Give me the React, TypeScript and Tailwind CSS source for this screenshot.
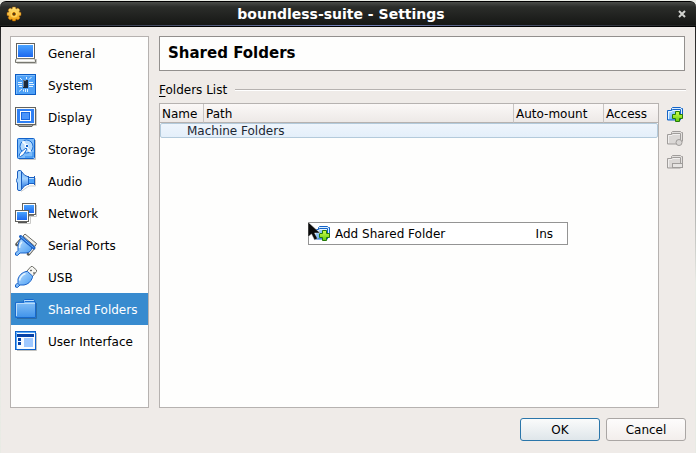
import type { ReactNode } from "react";

type IconProps = { children: ReactNode };

function PageIcon({ children }: IconProps) {
  return (
    <svg width="24" height="24" viewBox="0 0 24 24" fill="none" aria-hidden="true" className="shrink-0">
      {children}
    </svg>
  );
}

function Gradients() {
  return (
    <svg width="0" height="0" className="absolute" aria-hidden="true">
      <defs>
        <linearGradient id="screen" x1="0" y1="0" x2="0" y2="1">
          <stop offset="0" stopColor="#4aa3ff" />
          <stop offset="1" stopColor="#1c68ee" />
        </linearGradient>
        <linearGradient id="sky" x1="0" y1="0" x2="1" y2="1">
          <stop offset="0" stopColor="#c4e4ff" />
          <stop offset="1" stopColor="#3f97f2" />
        </linearGradient>
        <linearGradient id="cone" x1="0" y1="0" x2="0" y2="1">
          <stop offset="0" stopColor="#6db5fa" />
          <stop offset="0.4" stopColor="#a5d3ff" />
          <stop offset="1" stopColor="#1b6fe0" />
        </linearGradient>
        <linearGradient id="folder" x1="0" y1="0" x2="0" y2="1">
          <stop offset="0" stopColor="#8ec6f8" />
          <stop offset="1" stopColor="#3f93ea" />
        </linearGradient>
        <linearGradient id="plus" x1="0" y1="0" x2="0" y2="1">
          <stop offset="0" stopColor="#d4ff4a" />
          <stop offset="1" stopColor="#62cc12" />
        </linearGradient>
        <linearGradient id="gear" x1="0" y1="0" x2="0" y2="1">
          <stop offset="0" stopColor="#ffe680" />
          <stop offset="1" stopColor="#f09a08" />
        </linearGradient>
      </defs>
    </svg>
  );
}

const pages: { name: string; icon: ReactNode }[] = [
  {
    name: "General",
    icon: (
      <>
        <path d="M3 22.5h19.5V18" stroke="#c9c9c5" />
        <rect x="2.5" y="2.5" width="18" height="15" fill="#fff" stroke="#62625e" />
        <rect x="4" y="4" width="15" height="12" fill="url(#screen)" />
        <path d="M2.5 17.5h18l1 1.5v2.5h-20V19z" fill="#e4e4de" stroke="#777770" />
        <path d="M3 19.5h17" stroke="#fff" />
      </>
    ),
  },
  {
    name: "System",
    icon: (
      <>
        <rect x="1.5" y="1.5" width="20" height="20" fill="#4da0f6" stroke="#0b5cc4" />
        <path d="M2.5 21V2.5H21" stroke="#7dbcfc" />
        <rect x="9" y="7" width="5" height="8" fill="#1c2a3a" />
        <path d="M9.500 14V7.500H12" stroke="#6f8296" />
        <path
          d="M4 9.500h4M4 11.500h4M5 13.500h3M15 9.500h4M15 11.500h5M15 13.500h4M12.500 4v2M15 6.500l2.500-2.500M5 18.500l3-2.500M11.500 16v3M13.500 16v3M9.500 16.500v2M6 5l2 2"
          stroke="#e5f4ff"
        />
      </>
    ),
  },
  {
    name: "Display",
    icon: (
      <>
        <path d="M3 20.500h19.500V4" stroke="#cdcdc9" />
        <rect x="1.500" y="2.500" width="20" height="17" fill="#f8f8f4" stroke="#62625e" />
        <rect x="3" y="4" width="17" height="14" fill="#2f80f4" />
        <rect x="6.500" y="6.500" width="10" height="9" fill="#1768df" stroke="#fff" />
        <rect x="8" y="8" width="7" height="6" fill="#4a95fb" />
        <path d="M4 20h15l-1 1.500H5z" fill="#eee" stroke="#62625e" />
      </>
    ),
  },
  {
    name: "Storage",
    icon: (
      <>
        <path d="M21.500 3v19.500H5" stroke="#c6c6c4" />
        <rect x="3.500" y="1.500" width="17" height="20" rx="1" fill="#7dbcfa" stroke="#1262c9" />
        <circle cx="12.500" cy="9.500" r="6.500" fill="#b5dafd" stroke="#1c6fd4" />
        <path d="M8 5l4.500 4L10 4zM17 14l-4.500-4 3 5z" fill="#fff" stroke="#e8f5ff" />
        <circle cx="12.500" cy="9" r="2" fill="#fff" />
        <rect x="12" y="8" width="2" height="2" fill="#1262c9" />
        <path d="M5 18.500l1.500-3 5.500-4.500 1 1-3.500 5.500-3 2z" fill="#fff" stroke="#1c6fd4" />
        <path d="M19 15v5h-8" stroke="#2b86ea" />
      </>
    ),
  },
  {
    name: "Audio",
    icon: (
      <>
        <path d="M7 22.500l8-5.500h6.500V9" stroke="#cfcfcd" />
        <path d="M7.500 2.500Q10 7 14.500 8v7Q10 16 7.500 20.500z" fill="url(#cone)" stroke="#1c5fc0" />
        <path d="M3.500 9V3Q3.500 1.500 5 1.500h1.500q1 0 1 1.500v17q0 1.500-1 1.500H5q-1.500 0-1.500-1.500v-6q-1-1-1-2.500t1-2.500z" fill="#a9d6ff" stroke="#1c5fc0" />
        <rect x="14.500" y="8.500" width="6" height="6" fill="#4ba2fa" stroke="#1c5fc0" />
        <path d="M15 9.500h5" stroke="#b5dcff" />
        <path d="M14.500 7v9M20.500 7v9" stroke="#1c5fc0" />
      </>
    ),
  },
  {
    name: "Network",
    icon: (
      <>
        <path d="M11 15.500h11.500V4M4 22.500h12.500V12" stroke="#c9c9c7" />
        <rect x="8.500" y="2.500" width="13" height="11" fill="#fff" stroke="#62625e" />
        <rect x="10" y="4" width="10" height="8" fill="url(#screen)" />
        <path d="M12 14.500h8" stroke="#777" />
        <rect x="1.500" y="9.500" width="13" height="11" fill="#fff" stroke="#62625e" />
        <rect x="3" y="11" width="10" height="8" fill="url(#screen)" />
        <path d="M4 21.500h9" stroke="#555" />
      </>
    ),
  },
  {
    name: "Serial Ports",
    icon: (
      <>
        <path d="M9 3l2-2 11.500 9.500-1.500 3z" fill="#f1f1ec" stroke="#6c6c66" />
        <path d="M3 11.500L7.500 6.500M14.500 21L19 15.500" stroke="#5d5d58" strokeWidth="3.500" strokeLinecap="round" />
        <path d="M3.500 11L8 6M15 20.500l4.500-5.500" stroke="#eeeeea" strokeWidth="1.500" />
        <path d="M7.500 5.500L18 14.500q-1 5-6 5.500H6l-2.500 2.500-2-.5v-2l2.500-2.500V12q1-5 3.500-6.500z" fill="url(#sky)" stroke="#1b62c8" />
        <path d="M6.500 3.500L20 15" stroke="#1b62c8" strokeWidth="3" strokeLinecap="round" />
        <path d="M7 3.800L19.500 14.500" stroke="#6db4fb" />
        <path d="M5.500 15q0-4 2.500-6" stroke="#e3f3ff" strokeWidth="1.500" />
      </>
    ),
  },
  {
    name: "USB",
    icon: (
      <>
        <path d="M12.500 6.500L17 1.500h1.500l4 3.500v1.500L18 12z" fill="#f6f6f2" stroke="#6c6c66" />
        <path d="M16.500 5l1 1M19.500 7.500l1 1" stroke="#444" strokeWidth="1.500" />
        <path d="M12 6.500h1.500l5 4.500v1.500Q16 19 10 20H6l-2.500 2.500-2-.5v-2L4 17.500V14Q6 8 12 6.500z" fill="url(#sky)" stroke="#1b62c8" />
        <path d="M5.500 15.500q1-5 6-7" stroke="#e6f5ff" strokeWidth="1.500" />
        <path d="M3.500 18l2 2" stroke="#1b62c8" />
      </>
    ),
  },
  {
    name: "Shared Folders",
    icon: (
      <>
        <path d="M3 21.500h19.500V6" stroke="#2c6da8" />
        <path d="M9.500 5V3.500l1-1h9l1 1V5h1v15.500h-20v-15z" fill="url(#folder)" stroke="#1769cc" />
        <path d="M10.500 3.500h9M2.500 19V6.500H21" stroke="#b9dcfb" />
        <path d="M2 5.500h8l1-1h9" stroke="#1d71d4" />
      </>
    ),
  },
  {
    name: "User Interface",
    icon: (
      <>
        <path d="M3 21.500h19.500V4" stroke="#c2c2bf" />
        <rect x="1.500" y="2.500" width="20" height="18" fill="#f7fbff" stroke="#0d62cc" />
        <path d="M2.500 20V3.500H21" stroke="#58aafa" />
        <rect x="3" y="5" width="17" height="3" fill="#0542a8" />
        <rect x="4" y="9" width="3" height="3" fill="#0542a8" />
        <rect x="4" y="13" width="3" height="3" fill="#0542a8" />
        <rect x="10" y="9" width="9" height="9" fill="#9ec8ff" />
      </>
    ),
  },
];

function FolderIcon({ badge }: { badge: "add" | "edit" | "remove" }) {
  const active = badge === "add";
  const line = active ? "#1564c8" : "#a09d9b";
  return (
    <svg width="16" height="16" viewBox="0 0 16 16" fill="none" aria-hidden="true" className="shrink-0">
      <path d="M4.500 3V1.500l1-1h8l1 1h1v9" fill={active ? "#d9eeff" : "#e3e0de"} stroke={line} />
      <path d="M.5 3.500h4l1-1h8v10.500H.5z" fill={active ? "url(#sky)" : "#dbd8d6"} stroke={line} />
      <path d="M1.500 12V4.500H5l1-1h7" stroke={active ? "#e5f5ff" : "#f1efee"} />
      {badge === "add" && (
        <path d="M8.500 4.500h4v3h3v4h-3v3h-4v-3h-3v-4h3z" fill="url(#plus)" stroke="#257a08" />
      )}
      {badge === "edit" && <circle cx="12" cy="11.500" r="3" fill="#d9d6d4" stroke="#a09d9b" />}
      {badge === "remove" && <rect x="5.500" y="8.500" width="10" height="4" fill="#e6e4e2" stroke="#a09d9b" />}
    </svg>
  );
}

function TitleBar() {
  return (
    <header className="rounded-t-md border-t border-black bg-linear-to-b from-[#4b4d4a] via-[#2b2d2a] via-20% to-[#141513]">
      <div className="flex h-[23px] items-center px-1.5">
        <svg width="16" height="16" viewBox="0 0 16 16" aria-hidden="true">
          <path
            d="M6.500 1h3l.5 2 2-1 2 2-1 2 2 .5v3l-2 .5 1 2-2 2-2-1-.5 2h-3L6 13l-2 1-2-2 1-2-2-.5v-3L3 6 2 4l2-2 2 1z"
            fill="url(#gear)"
            stroke="#a85c00"
            strokeWidth="0.500"
          />
          <circle cx="8" cy="8" r="3.500" fill="#ffd45a" />
          <circle cx="8" cy="8" r="1.500" fill="#2b2d2a" stroke="#b86a00" />
        </svg>
        <h1 className="flex-1 pr-3.5 text-center text-sm leading-4 font-bold text-white">boundless-suite - Settings</h1>
        <button type="button" aria-label="Close" className="flex h-4 w-4 items-center justify-center">
          <svg width="8" height="8" viewBox="0 0 8 8" aria-hidden="true">
            <path d="M1 1l6 6M7 1L1 7" stroke="#d2d3d0" strokeWidth="2" />
          </svg>
        </button>
      </div>
      <div className="h-px bg-linear-to-r from-[#20211f] via-[#7583bd] to-[#20211f]" />
      <div className="h-px bg-black" />
    </header>
  );
}

function Sidebar() {
  return (
    <nav className="flex w-[139px] shrink-0 flex-col border border-[#b6b2b0] bg-[#fefefd]">
      {pages.map((page) => (
        <button
          key={page.name}
          type="button"
          aria-current={page.name === "Shared Folders" ? "page" : undefined}
          className="flex h-8 items-center gap-2.5 pl-[3px] text-left whitespace-nowrap aria-[current=page]:bg-[#388bcf] aria-[current=page]:text-white"
        >
          <PageIcon>{page.icon}</PageIcon>
          <span className="pt-0.5">{page.name}</span>
        </button>
      ))}
    </nav>
  );
}

function ContextMenu() {
  return (
    <div className="absolute top-[118px] left-[148px] w-[260px] border border-[#949494] bg-white">
      <button type="button" role="menuitem" className="flex h-[21px] w-full items-center pr-3.5 pl-[5px] text-left">
        <FolderIcon badge="add" />
        <span className="flex-1 pl-[5px]">Add Shared Folder</span>
        <span>Ins</span>
      </button>
      <svg width="13" height="19" viewBox="0 0 13 19" aria-hidden="true" className="absolute -top-px -left-px">
        <path d="M0 0v15l3.500-3 3 6 3-1.500-3-5.500H12z" fill="#0a0a0a" stroke="#d8d8d8" strokeWidth="0.500" />
      </svg>
    </div>
  );
}

function FolderTable() {
  return (
    <div className="relative min-w-0 flex-1 border border-[#b6b2b0] bg-[#fefefd]">
      <table className="w-full table-fixed border-separate border-spacing-0 text-left leading-[14px]">
        <colgroup>
          <col className="w-11" />
          <col />
          <col className="w-[90px]" />
          <col className="w-[54px]" />
        </colgroup>
        <thead>
          <tr className="h-[19px] bg-linear-to-b from-[#fbf8f7] to-[#ece8e6]">
            <th className="border-r border-b border-[#b6b2b0] border-r-[#c9c5c3] p-0 pt-0.5 pl-0.5 font-normal">Name</th>
            <th className="border-r border-b border-[#b6b2b0] border-r-[#c9c5c3] p-0 pt-0.5 pl-0.5 font-normal">Path</th>
            <th className="border-r border-b border-[#b6b2b0] border-r-[#c9c5c3] p-0 pt-0.5 pl-0.5 font-normal">
              Auto-mount
            </th>
            <th className="border-b border-[#b6b2b0] p-0 pt-0.5 pl-0.5 font-normal">Access</th>
          </tr>
        </thead>
        <tbody>
          <tr className="h-[15px]">
            <td
              colSpan={4}
              className="rounded-xs border border-[#b3cadb] bg-linear-to-b from-[#eef5fc] to-[#e4effa] p-0 pt-px pl-[26px] leading-3 text-[#1c2733]"
            >
              Machine Folders
            </td>
          </tr>
        </tbody>
      </table>
      <ContextMenu />
    </div>
  );
}

function Toolbar() {
  return (
    <div className="flex w-[27px] shrink-0 flex-col items-center gap-2 pt-1 pl-1">
      <button type="button" aria-label="Add shared folder">
        <FolderIcon badge="add" />
      </button>
      <button type="button" aria-label="Edit shared folder" disabled>
        <FolderIcon badge="edit" />
      </button>
      <button type="button" aria-label="Remove shared folder" disabled>
        <FolderIcon badge="remove" />
      </button>
    </div>
  );
}

export default function App() {
  return (
    <div className="min-h-screen bg-[#e9ebe5] pt-px font-['DejaVu_Sans',sans-serif] text-xs text-black">
      <Gradients />
      <div className="flex min-h-[calc(100vh-1px)] flex-col">
        <TitleBar />
        <div className="flex flex-1 bg-[#efebe8]">
          <div className="w-px bg-linear-to-b from-[#222] via-[#999] via-30% to-[#e9ebe5] to-60%" />
          <main className="flex min-w-0 flex-1 flex-col px-[9px] pt-[9px] pb-3">
            <div className="flex flex-1 gap-2.5">
              <Sidebar />
              <section className="flex min-w-0 flex-1 flex-col">
                <h2 className="mr-px flex h-[35px] items-center border border-[#93908e] bg-[#fefefd] pl-2 text-[15px] font-bold">
                  Shared Folders
                </h2>
                <div className="flex h-8 items-center gap-2 pt-1.5">
                  <h3>
                    <span className="underline underline-offset-2">F</span>olders List
                  </h3>
                  <div className="h-0.5 flex-1 border-t border-[#b6b2b0] bg-white" />
                </div>
                <div className="flex flex-1">
                  <FolderTable />
                  <Toolbar />
                </div>
              </section>
            </div>
            <div className="flex justify-end gap-1.5 pt-2.5">
              <button
                type="button"
                className="h-[23px] w-20 rounded-[3px] border border-[#2b76aa] bg-linear-to-b from-[#fafbfb] to-[#dfe6ea]"
              >
                OK
              </button>
              <button
                type="button"
                className="h-[23px] w-20 rounded-[3px] border border-[#aaa6a4] bg-linear-to-b from-[#fdfcfc] to-[#f3eeec]"
              >
                Cancel
              </button>
            </div>
          </main>
          <div className="w-px bg-linear-to-b from-[#222] via-[#888] via-30% to-[#e9ebe5] to-60%" />
        </div>
      </div>
    </div>
  );
}
